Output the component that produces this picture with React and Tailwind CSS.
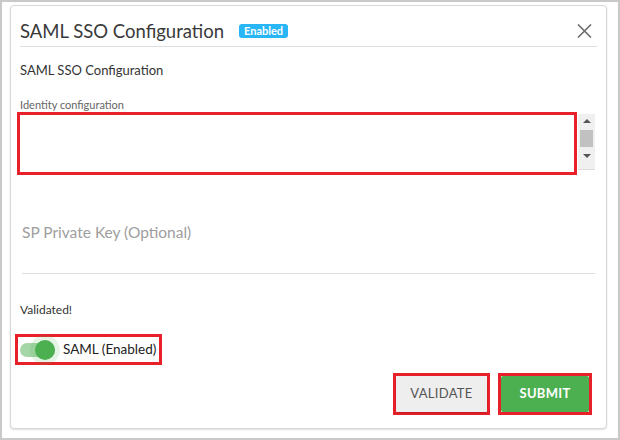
export default function App() {
  return (
    <div
      className="w-[620px] h-[440px] bg-white border-2 border-[#c9c9c9] pl-[8px] pt-[3px] overflow-hidden"
      style={{ fontFamily: 'Lato, "Liberation Sans", sans-serif' }}
    >
      <div className="w-[597px] h-[424px] bg-white border border-[#d4d8db] rounded-[4px] shadow-[0_1px_2px_rgba(0,0,0,0.12)] px-[9px]">
        {/* Header */}
        <div className="flex items-center h-[41px] pt-[10px] border-b border-[#dcdfe1]">
          <span className="text-[18.5px] text-[#3a3a3a] leading-none">SAML SSO Configuration</span>
          <span className="ml-[15px] h-[14px] px-[5px] rounded-[3px] bg-[#29b6f6] text-white text-[11px] font-bold leading-[14px]">
            Enabled
          </span>
          <button className="ml-auto mr-[5px] w-[15px] h-[14px] text-[#6b6b6b]" title="Close">
            <svg viewBox="0 0 15 14" width="15" height="14" fill="none" stroke="currentColor" strokeWidth="1.6">
              <path d="M1 0.5 L14 13.5 M14 0.5 L1 13.5" />
            </svg>
          </button>
        </div>

        <div className="mt-[14px] text-[13px] leading-[18px] text-[#333]">SAML SSO Configuration</div>

        {/* Identity configuration */}
        <div className="mt-[19px] text-[11px] leading-[14px] text-[#666]">Identity configuration</div>
        <div className="flex -ml-[3px]">
          <div className="w-[560px] h-[63px] border-[3px] border-[#e8202a] bg-white" />
          <div className="ml-[1px] mt-[2px] w-[17px] h-[56px] bg-[#f0f0f0] border-b border-[#dcdcdc] flex flex-col items-center">
            <div className="mt-[5px] w-0 h-0 border-l-[4px] border-r-[4px] border-b-[4px] border-l-transparent border-r-transparent border-b-[#555]" />
            <div className="mt-[7px] w-[13px] h-[17px] bg-[#c1c1c1]" />
            <div className="mt-[7px] w-0 h-0 border-l-[4px] border-r-[4px] border-t-[4px] border-l-transparent border-r-transparent border-t-[#555]" />
          </div>
        </div>

        {/* SP Private Key */}
        <div className="mt-[46px] mx-[2px] pb-[30px] border-b border-[#dcdfe1]">
          <div className="text-[15.5px] leading-[22px] text-[#9e9e9e]">SP Private Key (Optional)</div>
        </div>

        <div className="mt-[28px] text-[12px] leading-[16px] text-[#333]">Validated!</div>

        {/* Toggle */}
        <div className="mt-[16px] -ml-[5px] w-[147px] h-[31px] border-[3px] border-[#e8202a] flex items-center">
          <div className="relative ml-[2px] w-[35px] h-[14px] rounded-full bg-[#a5d6a7]">
            <div className="absolute right-[0px] top-[-3px] w-[20px] h-[20px] rounded-full bg-[#4caf50] shadow-[0_0_0_5px_rgba(76,175,80,0.14)]" />
          </div>
          <span className="ml-[8px] text-[13.5px] text-[#222]">SAML (Enabled)</span>
        </div>

        {/* Buttons */}
        <div className="mt-[8px] flex justify-end gap-[8px] mr-[5px]">
          <div className="border-[3px] border-[#e8202a]">
            <button className="w-[91px] h-[36px] bg-[#eeeeee] text-[#555] text-[13px] tracking-[0.3px] rounded-[2px] shadow-[0_1px_2px_rgba(0,0,0,0.2)]">
              VALIDATE
            </button>
          </div>
          <div className="border-[3px] border-[#e8202a]">
            <button className="w-[88px] h-[36px] bg-[#4caf50] text-white text-[13px] font-bold tracking-[0.3px] rounded-[2px]">
              SUBMIT
            </button>
          </div>
        </div>
      </div>
    </div>
  );
}
